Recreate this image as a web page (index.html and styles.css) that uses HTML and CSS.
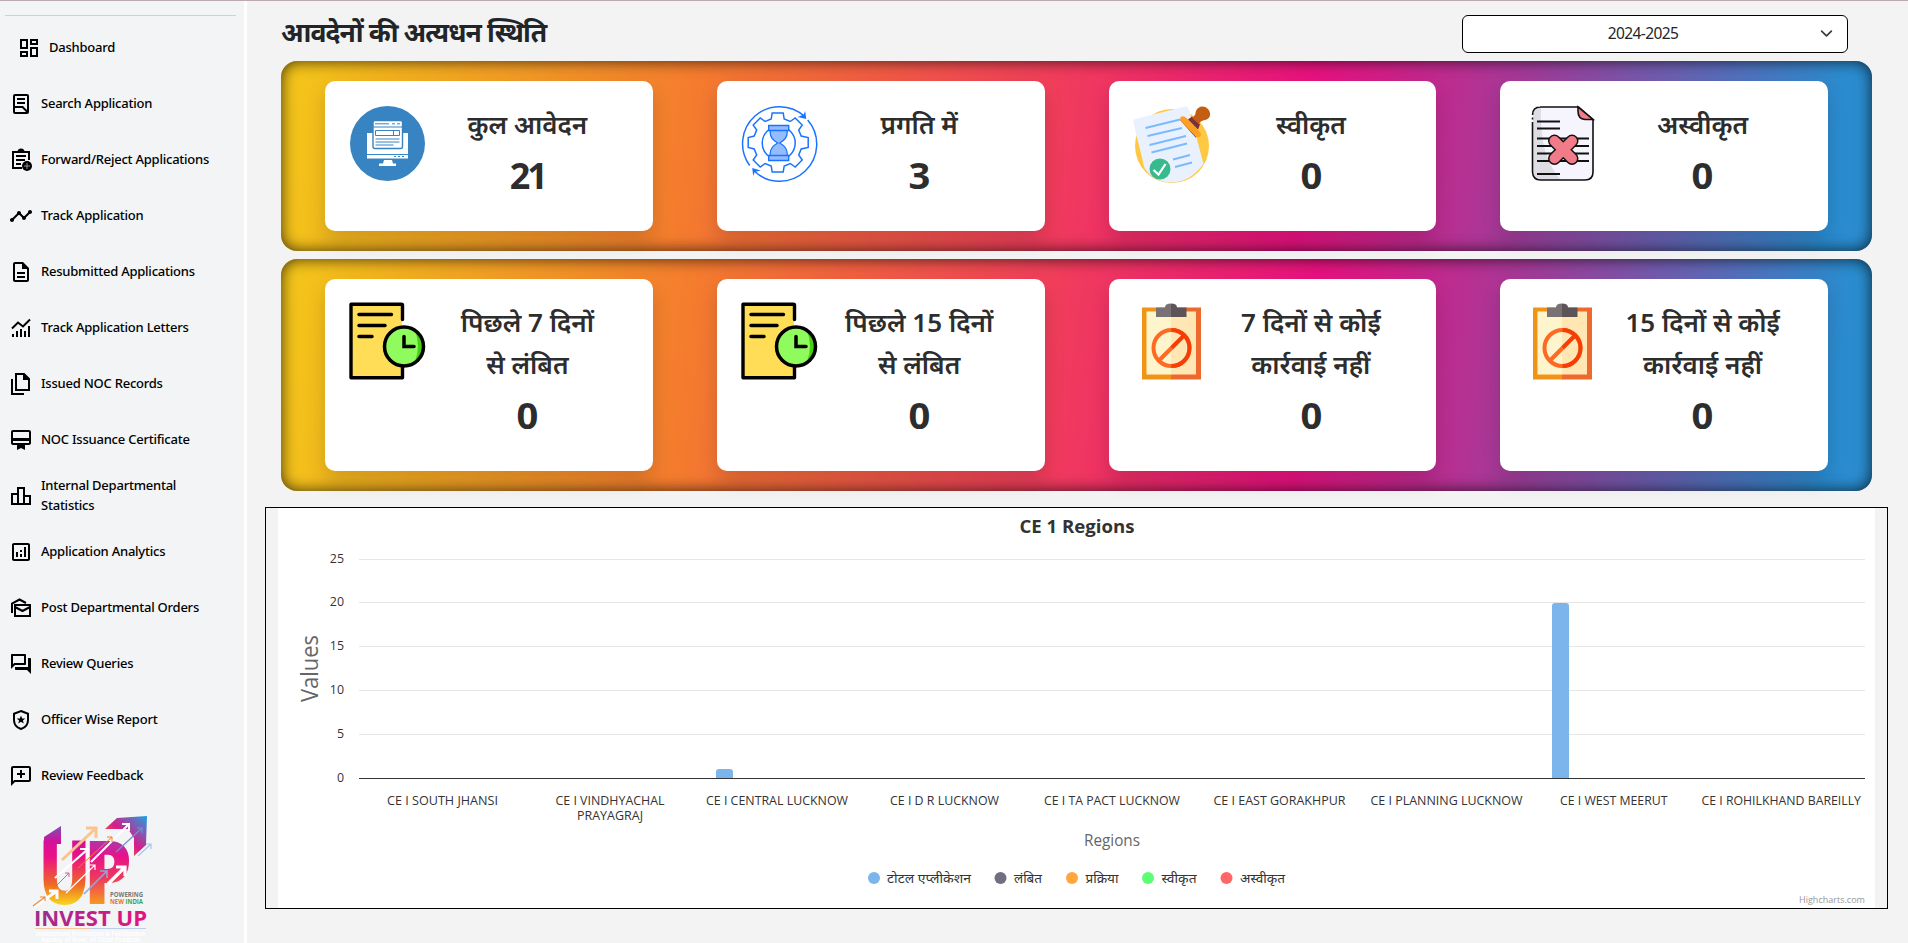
FILE: index.html
```html
<!DOCTYPE html>
<html lang="hi">
<head>
<meta charset="utf-8">
<title>Dashboard</title>
<link rel="stylesheet" href="styles.css">
</head>
<body>
<div class="app">
  <aside class="sidebar">
    <hr class="rule">
    <nav class="nav">
      <a class="item first"><svg class="ico" viewBox="0 0 24 24"><path d="M19 5v2h-4V5h4M9 5v6H5V5h4m10 8v6h-4v-6h4M9 17v2H5v-2h4M21 3h-8v6h8V3zM11 3H3v10h8V3zm10 8h-8v10h8V11zm-10 4H3v6h8v-6z"/></svg><span>Dashboard</span></a>
      <a class="item"><svg class="ico line" viewBox="0 0 24 24"><rect x="5" y="3" width="14" height="18" rx="1"/><path d="M8 7h8M8 11h8M5 15h8.500l5 5M13.500 15l1.500 1.500"/></svg><span>Search Application</span></a>
      <a class="item"><svg class="ico line" viewBox="0 0 24 24"><path d="M20 12V4H4v16h9M7 8h10M7 12h9M7 16h5"/><path d="M8.500 4a3.500 3.500 0 0 1 7 0z" class="solid"/><circle cx="18" cy="18" r="5" class="solid"/><path d="M18 15v6M15 18h6" class="plus"/></svg><span>Forward/Reject Applications</span></a>
      <a class="item"><svg class="ico" viewBox="0 0 24 24"><path d="M23 8c0 1.100-.9 2-2 2-.18 0-.35-.02-.51-.07l-3.560 3.550c.05.16.07.34.07.52 0 1.100-.9 2-2 2s-2-.9-2-2c0-.18.02-.36.07-.52l-2.550-2.550c-.16.05-.34.07-.52.07s-.36-.02-.52-.07l-4.550 4.560c.05.16.07.33.07.51 0 1.100-.9 2-2 2s-2-.9-2-2 .9-2 2-2c.18 0 .35.02.51.07l4.560-4.550C8.020 9.360 8 9.180 8 9c0-1.100.9-2 2-2s2 .9 2 2c0 .18-.02.36-.07.52l2.550 2.550c.16-.05.34-.07.52-.07s.36.02.52.07l3.550-3.560C19.020 8.350 19 8.180 19 8c0-1.100.9-2 2-2s2 .9 2 2z"/></svg><span>Track Application</span></a>
      <a class="item"><svg class="ico" viewBox="0 0 24 24"><path d="M8 16h8v2H8zm0-4h8v2H8zm6-10H6c-1.100 0-2 .9-2 2v16c0 1.100.89 2 1.990 2H18c1.100 0 2-.9 2-2V8l-6-6zm4 18H6V4h7v5h5v11z"/></svg><span>Resubmitted Applications</span></a>
      <a class="item"><svg class="ico line" viewBox="0 0 24 24"><path d="M3 12.500L9 6.500L14 10.500L21 3.500M4 21v-3M8 21v-6M12 21v-8M16 21v-6M20 21V10"/></svg><span>Track Application Letters</span></a>
      <a class="item"><svg class="ico line" viewBox="0 0 24 24"><path d="M7 2h8l5 5v11H7zM15 2v5h5M3 7v15h12"/><path class="solid" d="M15 2v5h5z"/></svg><span>Issued NOC Records</span></a>
      <a class="item"><svg class="ico" viewBox="0 0 24 24"><path d="M20 2H4c-1.110 0-2 .89-2 2v11c0 1.110.89 2 2 2h4v5l4-2 4 2v-5h4c1.110 0 2-.89 2-2V4c0-1.110-.89-2-2-2zm0 13H4v-2h16v2zm0-5H4V4h16v6z"/></svg><span>NOC Issuance Certificate</span></a>
      <a class="item"><svg class="ico" viewBox="0 0 24 24"><path d="M16 11V3H8v6H2v12h20V11h-6zm-6-6h4v14h-4V5zm-6 6h4v8H4v-8zm16 8h-4v-6h4v6z"/></svg><span>Internal Departmental<br>Statistics</span></a>
      <a class="item"><svg class="ico" viewBox="0 0 24 24"><path d="M19 3H5c-1.100 0-2 .9-2 2v14c0 1.100.9 2 2 2h14c1.100 0 2-.9 2-2V5c0-1.100-.9-2-2-2zm0 16H5V5h14v14zM7 12h2v5H7zm8-5h2v10h-2zm-4 7h2v3h-2zm0-4h2v2h-2z"/></svg><span>Application Analytics</span></a>
      <a class="item"><svg class="ico line" viewBox="0 0 24 24"><path d="M6 9h15v11H6zM6 11l7.500 4 7.500-4M3 17V7.500L10.500 3.500L17 7"/></svg><span>Post Departmental Orders</span></a>
      <a class="item"><svg class="ico" viewBox="0 0 24 24"><path d="M15 4v7H5.170L4 12.170V4h11m1-2H3c-.55 0-1 .45-1 1v14l4-4h10c.55 0 1-.45 1-1V3c0-.55-.45-1-1-1zm5 4h-2v9H6v2c0 .55.45 1 1 1h11l4 4V7c0-.55-.45-1-1-1z"/></svg><span>Review Queries</span></a>
      <a class="item"><svg class="ico line" viewBox="0 0 24 24"><path d="M12 3l7 2.700V12c0 4.500-3 7.800-7 9c-4-1.200-7-4.500-7-9V5.700z"/><path class="star" d="M12 7.500l1.200 3h3.100l-2.400 2 .9 3.100-2.800-1.800-2.800 1.800 .9-3.100-2.400-2h3.100z"/></svg><span>Officer Wise Report</span></a>
      <a class="item"><svg class="ico" viewBox="0 0 24 24"><path d="M20 2H4c-1.100 0-2 .9-2 2v18l4-4h14c1.100 0 2-.9 2-2V4c0-1.100-.9-2-2-2zm0 14H5.170L4 17.170V4h16v12zM13 14h-2v-3H8V9h3V6h2v3h3v2h-3z"/></svg><span>Review Feedback</span></a>
    </nav>
    <svg class="logo" viewBox="32 812 124 131">
      <defs>
        <linearGradient id="up" gradientUnits="userSpaceOnUse" x1="0" y1="-78" x2="0" y2="0">
          <stop offset="0" stop-color="#7a52b5"/><stop offset=".2" stop-color="#d3109b"/><stop offset=".4" stop-color="#ec1085"/><stop offset=".75" stop-color="#ef6a25"/><stop offset="1" stop-color="#f8d21c"/>
        </linearGradient>
        <linearGradient id="pp" gradientUnits="userSpaceOnUse" x1="0" y1="-64" x2="0" y2="0">
          <stop offset="0" stop-color="#a83aa8"/><stop offset=".25" stop-color="#e8118c"/><stop offset=".6" stop-color="#ee3a5a"/><stop offset="1" stop-color="#f59a20"/>
        </linearGradient>
        <linearGradient id="ar" x1="0" y1="1" x2="1" y2="0"><stop offset=".2" stop-color="#f26a30"/><stop offset=".5" stop-color="#d81b8a"/><stop offset="1" stop-color="#1ea0e0"/></linearGradient>
        <linearGradient id="iv"><stop offset="0" stop-color="#9a2f8c"/><stop offset="1" stop-color="#e5127f"/></linearGradient>
      </defs>
      <text class="big" transform="translate(38.500 904) scale(.78 1)" fill="url(#up)">U</text>
      <path d="M6 -60V-67L23 -78V-60z" transform="translate(38 904)" fill="url(#up)"/>
      <text class="big" transform="translate(84 904) scale(.86 1)" fill="url(#pp)">P</text>
      <path d="M105 829L117 818L147 816L146 845L134 856V838L128 829z" fill="url(#ar)"/>
      <g fill="none">
        <path d="M62 860L96 828M86 828H96V838" stroke="#fbc48d" stroke-width="3"/>
        <path d="M55 878L88 849M80 849H88V857" stroke="#fff" stroke-width="2.200"/>
        <path d="M91 862L129 824M122 824H129V831" stroke="#fff" stroke-width="2"/>
        <path d="M66 893L95 865M90 865H95V870" stroke="#fff" stroke-width="1.200"/>
        <path d="M108 884L125 867M116 867H125V876" stroke="#fff" stroke-width="3.200"/>
        <path d="M78 868L112 837M107 837H112V842" stroke="#f08030" stroke-width="1"/>
        <path d="M116 852L142 828M137 828H142V833" stroke="#7a8cd0" stroke-width="1.200"/>
        <path d="M138 856L151 844M146 844H151V849" stroke="#a9c3ea" stroke-width="1.200"/>
        <path d="M84 894L107 871M100 871H107V878" stroke="#8fa8dc" stroke-width="1.600"/>
        <path d="M53 889L69 873M65 873H69V877" stroke="#e05aa0" stroke-width="1"/>
        <path d="M34 907L57 891M49 891H57V899" stroke="#fff" stroke-width="3"/>
        <path d="M33 906L45 897M40 897H45V901" stroke="#ef8a3a" stroke-width="1.200"/>
      </g>
      <text class="tag" x="110" y="897" fill="#777" textLength="33" lengthAdjust="spacingAndGlyphs">POWERING</text>
      <text class="tag" x="110" y="903.500" textLength="33" lengthAdjust="spacingAndGlyphs"><tspan fill="#f0712c">NEW </tspan><tspan fill="#3aa648">INDIA</tspan></text>
      <text class="inv" x="34" y="926" fill="url(#iv)" textLength="113" lengthAdjust="spacingAndGlyphs">INVEST UP</text>
      <path d="M35 928.500H90" stroke="#f7b98a" stroke-width=".8"/><path d="M90 928.500H146" stroke="#a9c3ea" stroke-width=".8"/>
      <text class="sub" x="36" y="936" textLength="109" lengthAdjust="spacingAndGlyphs">Investment Promotion &amp; Facilitation</text>
      <text class="sub" x="41" y="942" textLength="99" lengthAdjust="spacingAndGlyphs">Agency of Govt. of Uttar Pradesh</text>
    </svg>
  </aside>

  <main class="main">
    <header class="top">
      <h1 class="heading">आवदेनों की अत्यधन स्थिति</h1>
      <div class="select"><span>2024-2025</span><svg class="chev" viewBox="0 0 16 16"><path d="M2 5l6 6 6-6"/></svg></div>
    </header>

    <section class="panel">
      <article class="card">
        <svg class="pic" viewBox="0 0 75 75"><circle cx="37.500" cy="37.500" r="37.500" fill="#3884c2"/><path d="M17 27h41v25.500H17zM34 54h8l1 3.500h3V60H29v-2.500h4z" fill="#fff"/><rect x="23" y="14.500" width="29.500" height="28" rx="2" fill="#fff" stroke="#3884c2" stroke-width="1.400"/><path d="M23 21h29M17 48.500h41" stroke="#3884c2" stroke-width="1.200"/><path d="M25 17.800h14M42 17.800h3M47 17.800h3M25.500 33h24M25.500 36h24M25.500 39h18M44 50.500h2M48 50.500h2M52 50.500h2" stroke="#3884c2" stroke-width="1"/><path d="M25.500 24.500h24v5h-24zM43.500 24.500v5" fill="none" stroke="#3884c2"/></svg>
        <div class="txt"><h2>कुल आवेदन</h2><strong class="pair">21</strong></div>
      </article>
      <article class="card">
        <svg class="pic" viewBox="0 0 75 75"><g transform="translate(-.8 -.5)"><g fill="none" stroke="#1a73ff" stroke-width="1.500"><path d="M8.500 60A37 37 0 0 1 63.500 11M66.500 14.500A37 37 0 0 1 13 65.500"/><path d="M31 7.500h11l1 6 6 2.500 5-3.500 7 7-3.500 5 2.500 6 7 1.500v10l-7 1.500-2.500 6 3.500 5-7 7-5-3.500-6 2.500-1 6h-11l-1-6-6-2.500-5 3.500-7-7 3.500-5-2.500-6-6-1.500v-10l6-1.500 2.500-6-3.500-5 7-7 5 3.500 6-2.500z"/><circle cx="37.500" cy="37.500" r="16.500"/></g><path d="M65 13.500l-1-8-1.500 3.500-6 2.500zM11 62.500l1 8 1.500-4 6-1.500z" fill="#1a73ff"/><path d="M29 24h17v3c0 5-3 8-7.500 10.500 4.500 2.500 7.500 5 7.500 10.500v3H29v-3c0-5.500 3-8 7.500-10.500C32 35 29 32 29 27z" fill="#93bdff" stroke="#1a73ff" stroke-width="1.300"/><path d="M27.500 20h20v5h-20zM27.500 50h20v5h-20z" fill="#93bdff" stroke="#1a73ff" stroke-width="1.400"/></g></svg>
        <div class="txt"><h2>प्रगति में</h2><strong>3</strong></div>
      </article>
      <article class="card">
        <svg class="pic" viewBox="0 0 75 75"><circle cx="38" cy="40" r="37" fill="#ffc843"/><path d="M1 13L51 .500Q54 0 55 3L69.500 58Q56 76 38 76.500Q20 76 10.500 62L-.500 17Q-1 14 1 13z" fill="#e9f1ff"/><path d="M11.500 22L46 13.500M13.500 30L48 22M15.500 39L52 30M17.500 46.500L53 37.500M39 53.500L56 49M41 61L58 56.500" stroke="#7abaff" stroke-width="2"/><circle cx="26" cy="63" r="10.500" fill="#38b98e"/><path d="M19.500 64l5 4.500 7-10.500" fill="none" stroke="#fff" stroke-width="2.200"/><path d="M46 14l15.500 17.500 3-1-15-16z" fill="#455a64"/><path d="M46.500 11q3-2 6 1l13 13.500q3 3 0 5.500L62 31 46 14z" fill="#ff9f22"/><path d="M54 13.500l4-3 8 8-2 5z" fill="#7c2f3d"/><path d="M58 12c4-3 3-4 4-7 2-5 8-6 12-2 4 5 2 10-3 11-4 1-4 1-6 4z" fill="#c25d12"/></svg>
        <div class="txt"><h2>स्वीकृत</h2><strong>0</strong></div>
      </article>
      <article class="card">
        <svg class="pic" viewBox="0 0 75 75"><path d="M16 1h38l14.500 13v52q0 8-8 8H16q-8 0-8-8V9q0-8 8-8z" fill="#f6f4fd"/><path d="M8 9q0-8 8-8-2 50 20 73H16q-8 0-8-8z" fill="#dedde4"/><path d="M15 1h38.500L68 13.500V66q0 8-8 8H15.500Q8 74 7.500 66V16M7.500 13.500v-2M7.500 9q0-8 8-8" fill="none" stroke="#111" stroke-width="1.600"/><path d="M53 1v4q0 8 7 8.500h8z" fill="#f27b89" stroke="#111" stroke-width="1.600"/><path d="M12 15.500h23M12 22.500h23M12 32.500h52M12 40h52M12 47.500h52M12 55h52M12 68h23" stroke="#111" stroke-width="1.800"/><path d="M29.500 35L47 52.500M47 35L29.500 52.500" stroke="#111" stroke-width="13" stroke-linecap="round"/><path d="M29.500 35L47 52.500M47 35L29.500 52.500" stroke="#f27b89" stroke-width="10" stroke-linecap="round"/></svg>
        <div class="txt"><h2>अस्वीकृत</h2><strong>0</strong></div>
      </article>
    </section>

    <section class="panel tall">
      <article class="card">
        <svg class="pic" viewBox="0 0 75 75"><g id="pend" transform="translate(-1 -.5)"><path d="M53 16V1.500H1.500v73H53V16" fill="#ffdd57"/><path d="M53 16V1.500Q53 .800 52 .800H1.500v73.500H53V62" fill="none" stroke="#000" stroke-width="3.400" stroke-linejoin="round" stroke-linecap="round" transform="translate(.5 0)"/><path d="M10 11h32.500M10 22h26M10 33h13" stroke="#000" stroke-width="3.500" stroke-linecap="round"/><circle cx="55" cy="43" r="19.500" fill="#8ffb5c"/><path d="M66 27a19 19 0 0 1 0 31q6-15 0-31z" fill="#46cf15"/><circle cx="55" cy="43" r="19.500" fill="none" stroke="#000" stroke-width="3.500"/><path d="M55 33v10h10" fill="none" stroke="#000" stroke-width="3.500" stroke-linecap="round"/></g></svg>
        <div class="txt"><h2>पिछले 7 दिनों<br>से लंबित</h2><strong>0</strong></div>
      </article>
      <article class="card">
        <svg class="pic" viewBox="0 0 75 75"><use href="#pend"/></svg>
        <div class="txt"><h2>पिछले 15 दिनों<br>से लंबित</h2><strong>0</strong></div>
      </article>
      <article class="card">
        <svg class="pic" viewBox="0 0 75 75"><g id="clip" transform="translate(0 -.5)"><path d="M8 4h30v72H8z" fill="#f09418"/><path d="M37 4h30v72H37z" fill="#ee692e"/><path d="M12.500 8h25v63h-25z" fill="#fff5cc"/><path d="M37 8h25v63H37z" fill="#ffe6b3"/><path d="M22 4h9q0-4 6-4v13.500H22z" fill="#7a7174"/><path d="M37 0q6 0 6 4h9.500v9.500H37z" fill="#5c5456"/><circle cx="37.500" cy="44.500" r="18" fill="none" stroke="#ff6a22" stroke-width="4"/><path d="M37.500 26.500a18 18 0 0 1 0 36" fill="none" stroke="#f53d05" stroke-width="4"/><path d="M25 57l12.500-12.500" stroke="#ff6a22" stroke-width="4"/><path d="M37.500 44.500L50 32" stroke="#f53d05" stroke-width="4"/></g></svg>
        <div class="txt"><h2>7 दिनों से कोई<br>कार्रवाई नहीं</h2><strong>0</strong></div>
      </article>
      <article class="card">
        <svg class="pic" viewBox="0 0 75 75"><use href="#clip"/></svg>
        <div class="txt"><h2>15 दिनों से कोई<br>कार्रवाई नहीं</h2><strong>0</strong></div>
      </article>
    </section>

    <section class="chartbox">
      <svg class="chart" viewBox="278 508 1597 400">
        <text class="title" x="1019.500" y="533" textLength="115" lengthAdjust="spacingAndGlyphs">CE 1 Regions</text>
        <path class="grid" d="M359 559.500H1865M359 602.500H1865M359 646.500H1865M359 690.500H1865M359 734.500H1865"/>
        <path class="bar" d="M716 778v-6q0-3 3-3h11q3 0 3 3v6zM1552 778V606q0-3 3-3h11q3 0 3 3v172z"/>
        <path class="axis" d="M359 778.500H1865"/>
        <g class="num"><text x="344" y="563">25</text><text x="344" y="606">20</text><text x="344" y="650">15</text><text x="344" y="694">10</text><text x="344" y="738">5</text><text x="344" y="782">0</text></g>
        <text class="vals" transform="translate(318 702) rotate(-90)" textLength="67" lengthAdjust="spacingAndGlyphs">Values</text>
        <g class="cat">
          <text x="387" y="805" textLength="111" lengthAdjust="spacingAndGlyphs">CE I SOUTH JHANSI</text>
          <text x="555.500" y="805" textLength="109" lengthAdjust="spacingAndGlyphs">CE I VINDHYACHAL</text>
          <text x="577" y="820" textLength="66" lengthAdjust="spacingAndGlyphs">PRAYAGRAJ</text>
          <text x="706" y="805" textLength="142" lengthAdjust="spacingAndGlyphs">CE I CENTRAL LUCKNOW</text>
          <text x="890" y="805" textLength="109" lengthAdjust="spacingAndGlyphs">CE I D R LUCKNOW</text>
          <text x="1044" y="805" textLength="136" lengthAdjust="spacingAndGlyphs">CE I TA PACT LUCKNOW</text>
          <text x="1213.500" y="805" textLength="132" lengthAdjust="spacingAndGlyphs">CE I EAST GORAKHPUR</text>
          <text x="1370.500" y="805" textLength="152" lengthAdjust="spacingAndGlyphs">CE I PLANNING LUCKNOW</text>
          <text x="1560" y="805" textLength="107.500" lengthAdjust="spacingAndGlyphs">CE I WEST MEERUT</text>
          <text x="1701.500" y="805" textLength="159.500" lengthAdjust="spacingAndGlyphs">CE I ROHILKHAND BAREILLY</text>
        </g>
        <text class="reg" x="1084" y="846" textLength="56" lengthAdjust="spacingAndGlyphs">Regions</text>
        <circle cx="874" cy="878" r="6" fill="#7cb5ec"/><circle cx="1000.500" cy="878" r="6" fill="#6f6f80"/><circle cx="1072" cy="878" r="6" fill="#ffa63d"/><circle cx="1148" cy="878" r="6" fill="#5cff73"/><circle cx="1226.500" cy="878" r="6" fill="#ff6666"/>
        <g class="leg">
          <text x="887" y="883" textLength="84" lengthAdjust="spacingAndGlyphs">टोटल एप्लीकेशन</text>
          <text x="1014" y="883" textLength="28" lengthAdjust="spacingAndGlyphs">लंबित</text>
          <text x="1085.500" y="883" textLength="33" lengthAdjust="spacingAndGlyphs">प्रक्रिया</text>
          <text x="1161.500" y="883" textLength="35" lengthAdjust="spacingAndGlyphs">स्वीकृत</text>
          <text x="1240" y="883" textLength="45" lengthAdjust="spacingAndGlyphs">अस्वीकृत</text>
        </g>
        <text class="credit" x="1799" y="903" textLength="66" lengthAdjust="spacingAndGlyphs">Highcharts.com</text>
      </svg>
    </section>
  </main>
</div>
</body>
</html>
```
FILE: styles.css
```css
* { box-sizing: border-box; }
body { margin: 0; height: 943px; overflow: hidden; background: #f3f3f3; font-family: "Noto Sans", "Noto Sans Devanagari", sans-serif; color: #212529; }
.app { display: flex; height: 943px; border-top: 1px solid #bbabb0; }
.sidebar { width: 247px; flex: none; background: #f2f4f6; border-right: 3px solid #fff; display: flex; flex-direction: column; }
.rule { width: 231px; height: 1px; margin: 14px 0 4px 5px; border: 0; background: #cfd1d3; flex: none; }
.nav { display: flex; flex-direction: column; flex: none; }
.item { height: 56px; display: flex; align-items: center; gap: 8px; padding-left: 9px; font-size: 13px; font-weight: 500; line-height: 20px; color: #000; letter-spacing: -.23px; }
.item span { position: relative; top: -1px; }
.first { padding-left: 17px; }
.ico { width: 24px; height: 24px; flex: none; fill: #000; }
.line { fill: none; stroke: #000; stroke-width: 2; }
.solid { fill: #000; stroke: none; }
.plus { stroke: #8899a5; stroke-width: 1; }
.star { fill: #000; stroke: none; }
.logo { width: 124px; height: 131px; margin: 8px 0 0 32px; flex: none; overflow: visible; }
.big { font: 800 88px "Open Sans", sans-serif; }
.tag { font: 700 7px "Open Sans", sans-serif; }
.inv { font: 700 21px "Open Sans", sans-serif; }
.sub { font: 700 6.500px "Open Sans", sans-serif; fill: #fff; }

.main { flex: 1; display: flex; flex-direction: column; min-width: 0; }
.top { height: 60px; padding: 14px 60px 0 34px; display: flex; justify-content: space-between; align-items: flex-start; }
.heading { margin: 0; font-size: 26.5px; line-height: 34px; font-weight: 700; white-space: nowrap; letter-spacing: -.9px; }
.select { width: 386px; height: 38px; border: 1px solid #000; border-radius: 6px; background: #fff; display: flex; align-items: center; padding: 0 14px 3px 3px; font-size: 15.5px; letter-spacing: -.6px; }
.select span { flex: 1; text-align: center; }
.chev { width: 13px; height: 13px; margin-top: 2px; fill: none; stroke: #343a40; stroke-width: 2; stroke-linecap: round; stroke-linejoin: round; }

.panel { height: 190px; margin: 0 36px 8px 34px; padding: 20px 44px; border-radius: 16px; display: grid; grid-template-columns: repeat(4, 1fr); column-gap: 64px;
  background: linear-gradient(97deg, #f3c41a 1%, #f47b2e 26%, #f0385f 50%, #e91280 64%, #a53a98 77%, #2a8ccf 97%); box-shadow: inset 0 0 15px rgba(0,0,0,.75); }
.tall { height: 232px; margin-bottom: 16px; }
.card { background: #fff; border-radius: 10px; padding: 25px 0 0 25px; display: flex; box-shadow: 0 10px 20px rgba(0,0,0,.15); }
.pic { width: 75px; height: 75px; flex: none; overflow: visible; }
.txt { flex: 1; padding: 0 23px 0 0; margin: -3px 0 0; text-align: center; color: #2d2d2d; }
.txt h2 { margin: 0; font-size: 26px; line-height: 42px; font-weight: 600; white-space: nowrap; }
.txt strong { display: block; font-size: 36px; line-height: 60px; font-weight: 700; padding-top: 1px; transform: scaleX(1.06); }
.txt .pair { letter-spacing: -3px; transform: none; }

.chartbox { margin: 0 20px 0 18px; height: 402px; border: 1px solid #000; padding: 0 12px; flex: none; }
.chart { display: block; width: 1597px; height: 400px; background: #fff; font-family: "Open Sans", "Noto Sans", sans-serif; }
.title { font-size: 18.500px; font-weight: 700; fill: #333; }
.grid { stroke: #e6e6e6; }
.axis { stroke: #333; }
.bar { fill: #7cb5ec; }
.num { font-size: 12.400px; text-anchor: end; fill: #333; }
.cat { font-size: 12.500px; fill: #333; }
.vals { font-size: 24px; fill: #666; }
.reg { font-size: 15.500px; fill: #666; }
.leg { font-size: 12.800px; fill: #333; }
.credit { font-size: 9.600px; fill: #999; }
```
